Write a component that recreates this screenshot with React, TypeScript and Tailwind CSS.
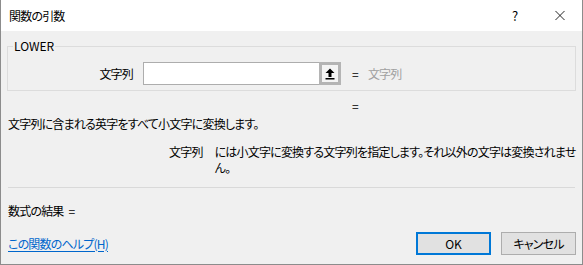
export default function App() {
  return (
    <div
      className="w-[583px] h-[265px] bg-[#f0f0f0] border-x border-b border-[#8c8c8c] flex flex-col text-[12px] leading-4 text-black [font-feature-settings:'palt'] tracking-[-0.8px]"
      style={{ fontFamily: '"Noto Sans CJK JP", "Noto Sans", sans-serif' }}
    >
      {/* タイトルバー */}
      <div className="h-[31px] shrink-0 bg-white flex items-center pl-[8px]">
        <span>関数の引数</span>
        <span className="ml-auto w-[10px] text-center text-[13px] tracking-normal">?</span>
        <span className="ml-[35px] mr-[17px] flex w-[10px] items-center justify-center">
          <svg width="11" height="11" viewBox="0 0 11 11">
            <path d="M0.5 0.5l10 10M10.5 0.5l-10 10" stroke="#111" strokeWidth="1" />
          </svg>
        </span>
      </div>

      {/* 引数グループ */}
      <fieldset className="mx-[6px] mt-[7px] border border-[#dcdcdc] pt-[8px] pb-[5px]">
        <legend className="ml-[5px] px-px leading-4 tracking-normal">LOWER</legend>
        <div className="flex items-center h-[23px]">
          <span className="w-[125px] text-right">文字列</span>
          <div className="ml-[10px] flex h-[23px] w-[198px] border border-[#adadad] bg-white">
            <div className="flex-1" />
            <div className="flex w-[22px] items-center justify-center border-[3px] border-[#b4b4b4] bg-[#f4f4f4] -my-px -mr-px">
              <svg width="10" height="12" viewBox="0 0 10 12">
                <path d="M5 0.5L9.5 5H6.5V9H3.5V5H0.5Z" fill="#000" />
                <rect x="0.5" y="10" width="9" height="1.5" fill="#000" />
              </svg>
            </div>
          </div>
          <span className="ml-[11px]">=</span>
          <span className="ml-[10px] text-[#a0a0a0]">文字列</span>
        </div>
      </fieldset>

      <div className="mt-[7px] pl-[351px]">=</div>

      {/* 説明 */}
      <div className="mt-[2px] px-[7px]">文字列に含まれる英字をすべて小文字に変換します。</div>
      <div className="mt-[12px] flex pl-[168px] pr-px">
        <span className="shrink-0">文字列</span>
        <span className="ml-[12px]">
          には小文字に変換する文字列を指定します。それ以外の文字は変換されません。
        </span>
      </div>

      <div className="mx-[7px] mt-[11px] border-t border-[#d9d9d9]" />

      <div className="mt-[15px] flex px-[7px]">
        <span>数式の結果</span>
        <span className="ml-[5px]">=</span>
      </div>

      {/* フッター */}
      <div className="mt-[13px] flex items-center pl-[7px] pr-[6px]">
        <a href="#" className="text-[#0066cc] underline underline-offset-2">
          この関数のヘルプ(H)
        </a>
        <button className="ml-auto h-[23px] w-[75px] border-2 border-[#0078d7] bg-[#e1e1e1] tracking-normal">OK</button>
        <button className="ml-[10px] h-[23px] w-[75px] border border-[#adadad] bg-[#e1e1e1]">キャンセル</button>
      </div>
    </div>
  )
}
